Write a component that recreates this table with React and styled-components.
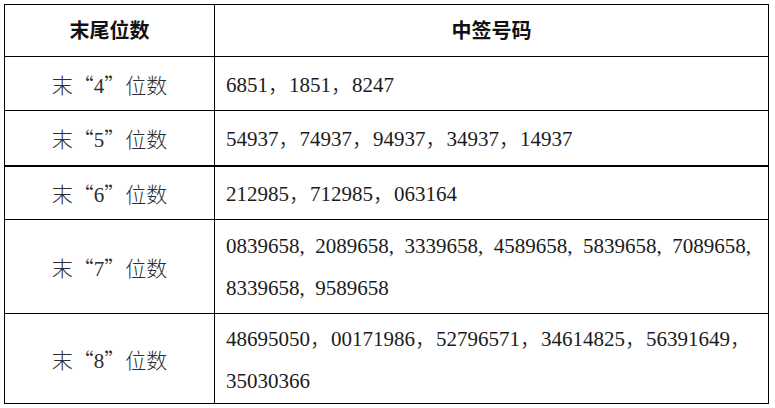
import React from 'react';
import styled, { createGlobalStyle } from 'styled-components';

const rows = [
  { digit: '4', height: 54, numbers: ['6851', '1851', '8247'] },
  { digit: '5', height: 55, thick: true, numbers: ['54937', '74937', '94937', '34937', '14937'] },
  { digit: '6', height: 54, numbers: ['212985', '712985', '063164'] },
  {
    digit: '7',
    height: 94,
    tight: true,
    numbers: ['0839658', '2089658', '3339658', '4589658', '5839658', '7089658', '8339658', '9589658'],
    breakAfter: 5
  },
  {
    digit: '8',
    height: 90,
    numbers: ['48695050', '00171986', '52796571', '34614825', '56391649', '35030366'],
    breakAfter: 4
  }
];

const App = () => {
  return (
    <>
      <GlobalStyle />
      <Page>
        <Table>
          <colgroup>
            <col style={{ width: 210 }} />
            <col style={{ width: 554 }} />
          </colgroup>
          <thead>
            <Row $height={52}>
              <HeadCell>末尾位数</HeadCell>
              <HeadCell>中签号码</HeadCell>
            </Row>
          </thead>
          <tbody>
            {rows.map(row => (
              <Row key={row.digit} $height={row.height} $thick={row.thick}>
                <LabelCell>
                  末“<Digit>{row.digit}</Digit>”位数
                </LabelCell>
                <NumberCell>
                  {row.numbers.map((num, i) => (
                    <React.Fragment key={num}>
                      {num}
                      {i < row.numbers.length - 1 && (
                        <Comma $tight={row.tight}>{row.tight ? ',' : '，'}</Comma>
                      )}
                      {row.breakAfter === i && <br />}
                    </React.Fragment>
                  ))}
                </NumberCell>
              </Row>
            ))}
          </tbody>
        </Table>
      </Page>
    </>
  );
};

const GlobalStyle = createGlobalStyle`
  html, body {
    margin: 0;
    padding: 0;
    background: #ffffff;
  }
`;

const Page = styled.div`
  width: 775px;
  height: 408px;
  padding: 4px 0 0 4px;
  box-sizing: border-box;
  background: #ffffff;
`;

const Table = styled.table`
  width: 764px;
  border-collapse: collapse;
  table-layout: fixed;
  color: #1b1b1b;
`;

const Row = styled.tr`
  height: ${p => p.$height}px;

  td {
    border-bottom: ${p => (p.$thick ? '2px' : '1px')} solid #000;
  }
`;

const HeadCell = styled.th`
  border: 1px solid #000;
  padding: 0 0 2px;
  text-align: center;
  vertical-align: middle;
  font-family: "Noto Sans CJK SC", sans-serif;
  font-weight: 700;
  font-size: 20px;
  color: #111;
`;

const LabelCell = styled.td`
  border: 1px solid #000;
  padding: 0;
  text-align: center;
  vertical-align: middle;
  font-family: "Noto Sans CJK SC", sans-serif;
  font-weight: 300;
  font-size: 21px;
  color: #2e2e2e;
`;

const Digit = styled.span`
  font-family: "Liberation Serif", serif;
  font-weight: 400;
`;

const NumberCell = styled.td`
  border: 1px solid #000;
  padding: 0 0 0 11px;
  text-align: left;
  vertical-align: middle;
  font-family: "Liberation Serif", "Noto Sans CJK SC", serif;
  font-size: 21px;
  line-height: 42px;
  white-space: nowrap;
`;

const Comma = styled.span`
  font-family: ${p => (p.$tight ? '"Liberation Serif", serif' : '"Noto Sans CJK SC", sans-serif')};
  font-weight: ${p => (p.$tight ? 400 : 300)};
  margin-right: ${p => (p.$tight ? '10.5px' : '0')};
`;

export default App;
